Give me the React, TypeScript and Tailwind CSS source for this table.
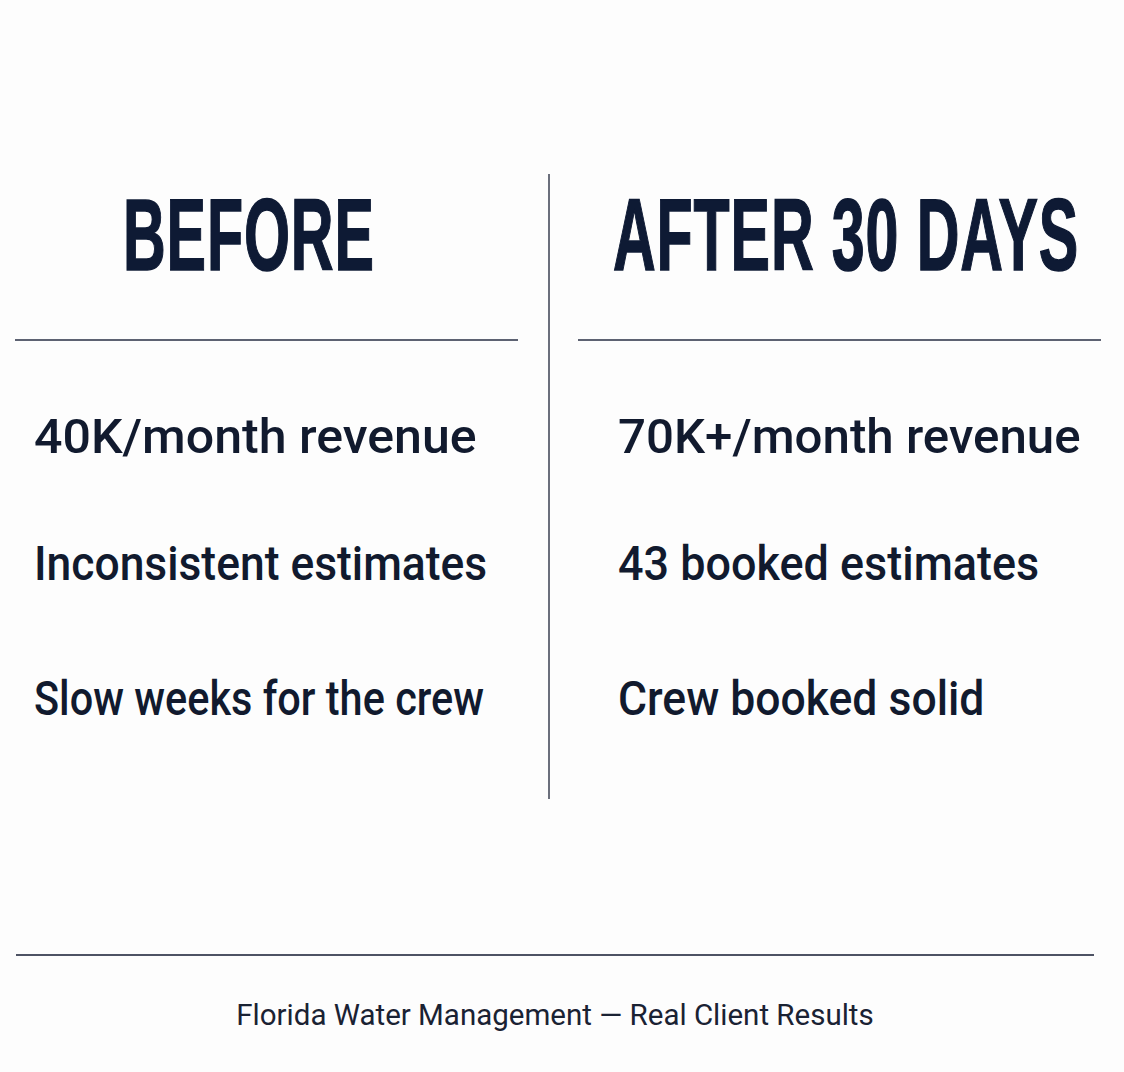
import React from "react";

type Item = { text: string; fit: string };

// the source face is narrower than Roboto on words, wider on figures: fit each line
const before: Item[] = [
    { text: "40K/month revenue", fit: "scale-x-[1.022]" },
    { text: "Inconsistent estimates", fit: "scale-x-[0.906]" },
    { text: "Slow weeks for the crew", fit: "scale-x-[0.846]" },
];
const after: Item[] = [
    { text: "70K+/month revenue", fit: "scale-x-[1.005]" },
    { text: "43 booked estimates", fit: "scale-x-[0.917]" },
    { text: "Crew booked solid", fit: "scale-x-[0.908]" },
];

function Heading({ children, className }: { children: React.ReactNode; className: string }) {
    return (
        <h2
            className={`whitespace-nowrap origin-left scale-x-[0.58] text-[102px] leading-none font-bold tracking-[1.5px] text-[#0e1a34] [-webkit-text-stroke:1.5px_#0e1a34] ${className}`}
            style={{ fontFamily: '"Liberation Sans", Arial, sans-serif' }}
        >
            {children}
        </h2>
    );
}

function Items({ items, className }: { items: Item[]; className: string }) {
    return (
        <ul className={`flex flex-col ${className}`}>
            {items.map((item, i) => (
                <li
                    key={item.text}
                    className={`whitespace-nowrap origin-left text-[49px] leading-none font-medium text-[#111a2e] ${item.fit} ${i === 1 ? "mt-[78px]" : ""} ${i === 2 ? "mt-[86px]" : ""}`}
                >
                    {item.text}
                </li>
            ))}
        </ul>
    );
}

export default function App() {
    return (
        <div
            className="w-[1124px] h-[1072px] bg-[#fdfdfd] overflow-hidden"
            style={{ fontFamily: 'Roboto, "Liberation Sans", sans-serif' }}
        >
            <div className="flex pt-[174px]">
                {/* before column */}
                <div className="w-[503px] ml-[15px] pt-[10px]">
                    <Heading className="ml-[108px]">BEFORE</Heading>
                    <div className="mt-[53px] h-[1.5px] bg-[#5d6272]" />
                    <Items items={before} className="mt-[71px] pl-[19px]" />
                </div>

                <div className="ml-[30px] w-[1.5px] h-[625px] bg-[#6b6f7c]" />

                {/* after column */}
                <div className="w-[523px] ml-[28px] pt-[10px]">
                    <Heading className="ml-[35px]">AFTER 30 DAYS</Heading>
                    <div className="mt-[53px] h-[1.5px] bg-[#5d6272]" />
                    <Items items={after} className="mt-[71px] pl-[40px]" />
                </div>
            </div>

            <div className="mt-[155px] ml-[16px] w-[1078px] h-[1.5px] bg-[#4e5364]" />
            <p className="mt-[45px] ml-[16px] w-[1078px] text-center text-[29.5px] leading-none text-[#1a2233]">
                Florida Water Management — Real Client Results
            </p>
        </div>
    );
}
